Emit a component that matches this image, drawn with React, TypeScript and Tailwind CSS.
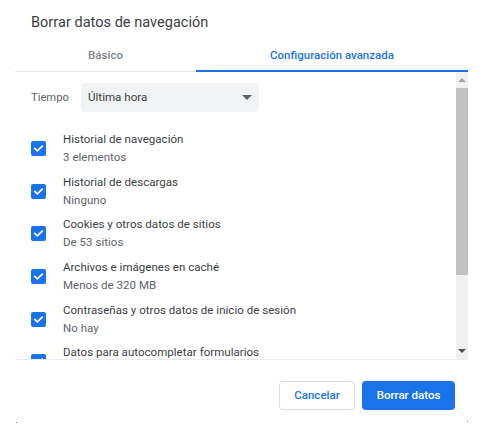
const items = [
  { label: "Historial de navegación", sub: "3 elementos" },
  { label: "Historial de descargas", sub: "Ninguno" },
  { label: "Cookies y otros datos de sitios", sub: "De 53 sitios" },
  { label: "Archivos e imágenes en caché", sub: "Menos de 320 MB" },
  { label: "Contraseñas y otros datos de inicio de sesión", sub: "No hay" },
  { label: "Datos para autocompletar formularios", sub: "" },
];

function Check() {
  return (
    <div className="mt-[11px] flex h-[15px] w-[15px] shrink-0 items-center justify-center rounded-[2px] bg-[#1a73e8]">
      <svg viewBox="0 0 15 15" className="h-[15px] w-[15px]" fill="none">
        <path d="M3.2 6.9 L6.3 9.8 L11.8 4.6" stroke="white" strokeWidth="1.8" />
      </svg>
    </div>
  );
}

export default function App() {
  return (
    <div className="relative flex h-[437px] w-[482px] flex-col bg-white pl-[15px] pr-[14px] font-['Roboto',sans-serif]">
      <h1 className="pl-4 pt-[14px] text-[14.5px] leading-[18px] tracking-[0.03px] text-[#3c4043]">
        Borrar datos de navegación
      </h1>

      {/* Tabs */}
      <div className="mt-[8px] flex h-[32px] border-b border-[#e4e6e8] text-[11.5px] font-medium">
        <div className="flex w-[181px] items-start justify-center pt-[7px] text-[#80868b]">Básico</div>
        <div className="-mb-px flex flex-1 items-start justify-center border-b-2 border-[#1a73e8] pt-[7px] text-[#1a73e8]">
          Configuración avanzada
        </div>
      </div>

      {/* Scroll area */}
      <div className="flex h-[288px] border-b border-[#e8eaed]">
        <div className="flex-1 overflow-hidden pl-4 pt-[11px]">
          <div className="flex items-center">
            <span className="w-[50px] pt-px text-[11.2px] text-[#5f6368]">Tiempo</span>
            <div className="flex h-[29px] w-[178px] items-center justify-between rounded-[4px] bg-[#f1f3f4] pl-[7px] pr-[7px] text-[11.6px] text-[#3c4043]">
              <span className="pt-px">Última hora</span>
              <div className="h-0 w-0 border-x-[5px] border-t-[5px] border-x-transparent border-t-[#5f6368]" />
            </div>
          </div>

          <div className="mt-[18px] flex flex-col gap-[6.7px]">
            {items.map((item) => (
              <div key={item.label} className="flex h-[36px] gap-[17px]">
                <Check />
                <div className="text-[11.5px] leading-[18px] tracking-[0.03px]">
                  <div className="text-[#3c4043]">{item.label}</div>
                  <div className="text-[#5f6368]">{item.sub}</div>
                </div>
              </div>
            ))}
          </div>
        </div>

        {/* Scrollbar */}
        <div className="flex w-[12px] flex-col bg-[#f1f1f1]">
          <div className="flex h-[16px] items-center justify-center">
            <div className="h-0 w-0 border-x-[4px] border-b-[4px] border-x-transparent border-b-[#a3a3a3]" />
          </div>
          <div className="h-[187px] bg-[#c1c1c1]" />
          <div className="mt-auto flex h-[16px] items-center justify-center">
            <div className="h-0 w-0 border-x-[4px] border-t-[4px] border-x-transparent border-t-[#505050]" />
          </div>
        </div>
      </div>

      {/* Footer */}
      <div className="mt-[21px] flex justify-end gap-[7px] pr-[13px] text-[11.5px] font-medium">
        <button className="h-[29px] w-[76px] rounded-[4px] border border-[#dadce0] bg-white text-[#1a73e8]">
          Cancelar
        </button>
        <button className="h-[29px] w-[93px] rounded-[4px] bg-[#1a73e8] text-white">Borrar datos</button>
      </div>

      {/* Corner specks left by the dialog's edge */}
      <div className="absolute left-[16px] top-[422px] h-px w-px bg-[#808080]" />
      <div className="absolute left-[467px] top-[421px] h-px w-px bg-[#808080]" />
    </div>
  );
}
